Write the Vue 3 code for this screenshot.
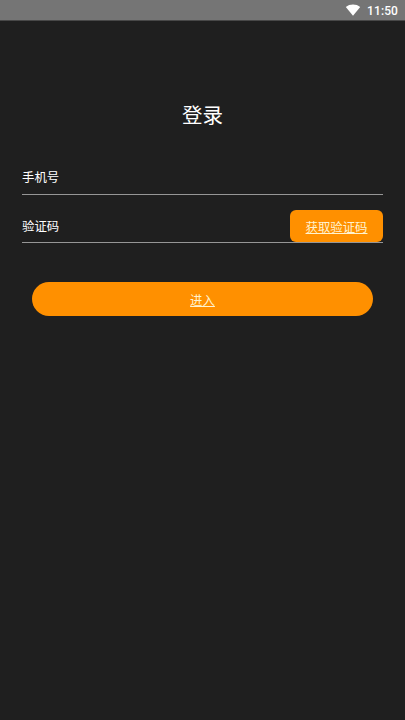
<script setup>
import { ref } from 'vue'

const time = ref('11:50')
</script>

<template>
  <div class="screen">
    <header class="status">
      <svg class="wifi" width="16" height="12" viewBox="0 0 16 12" aria-hidden="true">
        <path d="M0.8 2.9C2.8 1.2 5.2 0.4 8 0.4s5.2 0.8 7.2 2.5L8 11.8z" fill="#fff" />
      </svg>
      <span class="time">{{ time }}</span>
    </header>
    <main class="login">
      <h1 class="title">登录</h1>
      <div class="field phone">
        <span class="label">手机号</span>
      </div>
      <div class="field code">
        <span class="label">验证码</span>
        <a class="get-code">获取验证码</a>
      </div>
      <a class="enter">进入</a>
    </main>
  </div>
</template>

<style>
body {
  margin: 0;
  background: #1f1f1f;
}
</style>

<style scoped>
.screen {
  box-sizing: border-box;
  height: 720px;
  background: #1f1f1f;
  color: #fff;
  font-family: Roboto, "Noto Sans CJK SC", sans-serif;
}
.status {
  display: flex;
  box-sizing: border-box;
  justify-content: flex-end;
  align-items: center;
  gap: 6px;
  height: 20px;
  padding-right: 7px;
  background: #757575;
  box-shadow: 0 1px #484848;
}
.time {
  font-size: 12px;
  font-weight: 500;
  line-height: 14px;
  letter-spacing: 0.1px;
  padding-top: 2px;
}
.login {
  display: flex;
  flex-direction: column;
  padding: 81px 22px 0;
}
.title {
  margin: 0;
  height: 30px;
  line-height: 30px;
  font-size: 20.5px;
  font-weight: 400;
  text-align: center;
}
.field {
  display: flex;
  box-sizing: border-box;
  justify-content: space-between;
  border-bottom: 1px solid #969696;
  font-size: 12.4px;
}
.label {
  line-height: 34px;
}
.phone {
  height: 34px;
  margin-top: 30px;
}
.code {
  height: 33px;
  margin-top: 15px;
}
.get-code {
  width: 93px;
  height: 32px;
  border-radius: 6px;
  background: #ff9000;
  color: #fff3d0;
  line-height: 36px;
  text-align: center;
  text-decoration: underline;
}
.enter {
  height: 34px;
  margin: 39px 10px 0;
  border-radius: 17px;
  background: #ff9000;
  color: #fff3d0;
  font-size: 12.4px;
  line-height: 37px;
  text-align: center;
  text-decoration: underline;
}
</style>
